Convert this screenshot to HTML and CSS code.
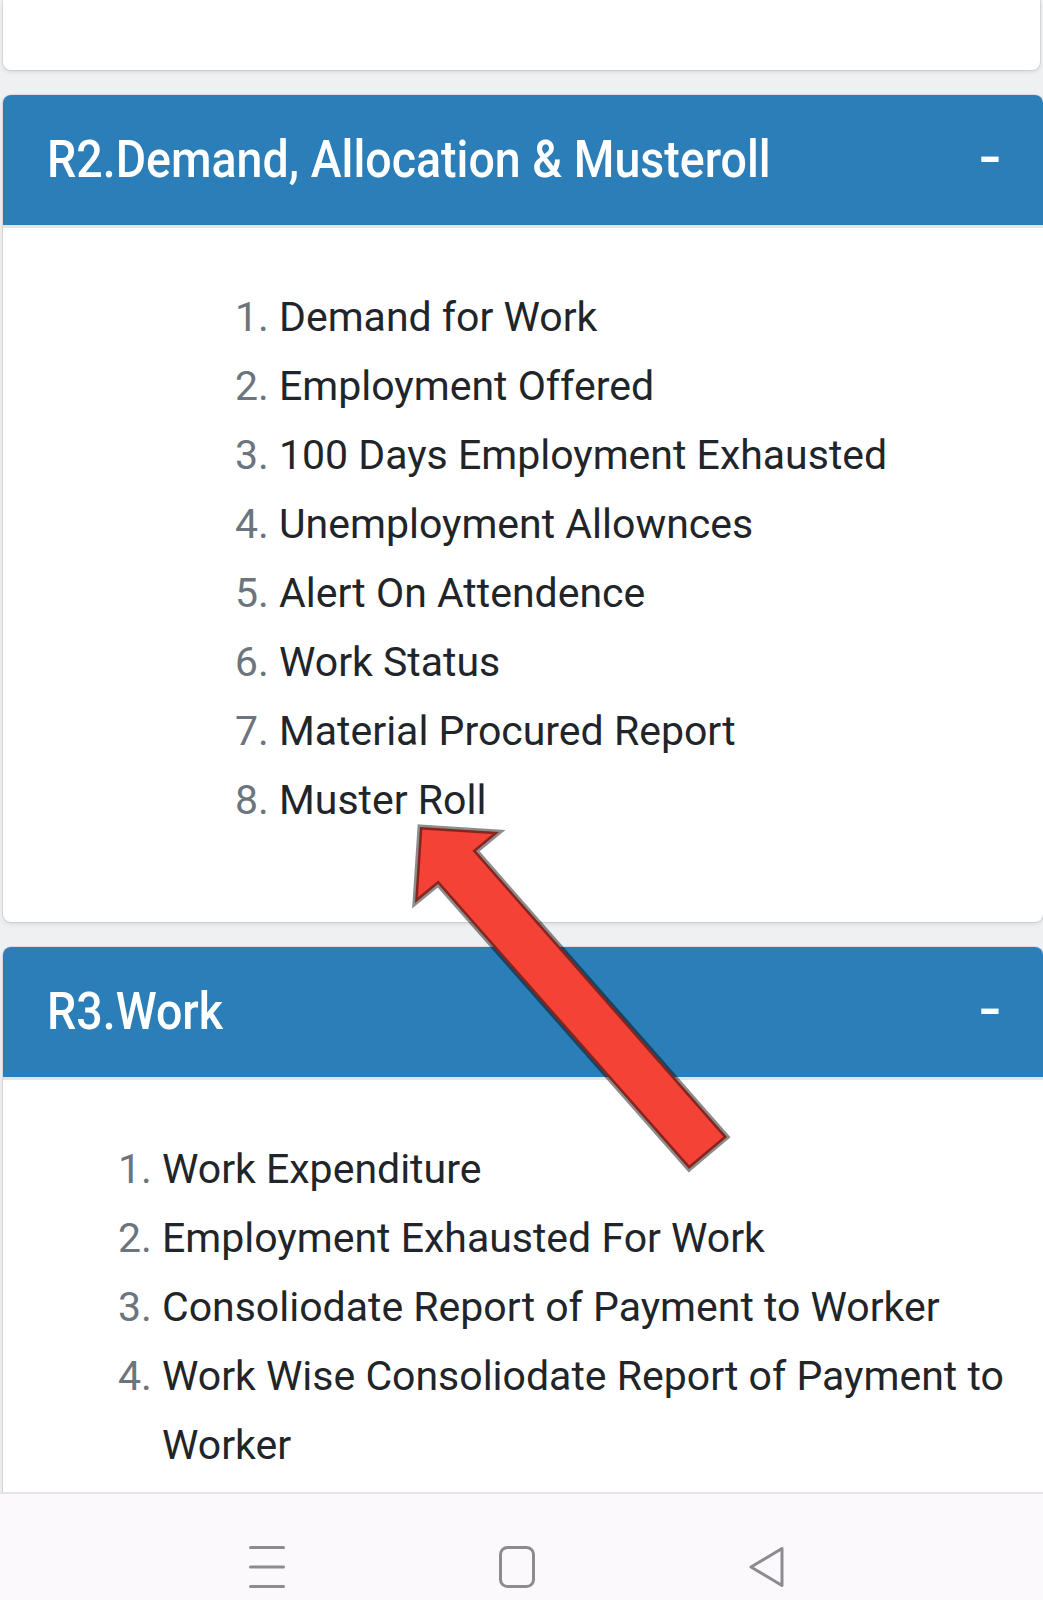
FILE: index.html
```html
<!DOCTYPE html>
<html lang="en">
<head>
<meta charset="utf-8">
<title>Reports</title>
<link rel="stylesheet" href="styles.css">
</head>
<body>
<div class="screen">
  <div class="content">
    <div class="card card-top"></div>

    <section class="card">
      <div class="card-header">
        <span class="title">R2.Demand, Allocation &amp; Musteroll</span>
        <span class="toggle">-</span>
      </div>
      <div class="card-body">
        <ol class="report-list list-r2">
          <li>Demand for Work</li>
          <li>Employment Offered</li>
          <li>100 Days Employment Exhausted</li>
          <li>Unemployment Allownces</li>
          <li>Alert On Attendence</li>
          <li>Work Status</li>
          <li>Material Procured Report</li>
          <li>Muster Roll</li>
        </ol>
      </div>
    </section>

    <section class="card">
      <div class="card-header">
        <span class="title">R3.Work</span>
        <span class="toggle">-</span>
      </div>
      <div class="card-body">
        <ol class="report-list list-r3">
          <li>Work Expenditure</li>
          <li>Employment Exhausted For Work</li>
          <li>Consoliodate Report of Payment to Worker</li>
          <li>Work Wise Consoliodate Report of Payment to Worker</li>
        </ol>
      </div>
    </section>
  </div>

  <nav class="navbar">
    <svg class="nav-icon" viewBox="0 0 36 42" width="36" height="42" aria-label="Menu">
      <line x1="1.5" y1="1.5" x2="34.5" y2="1.5"/>
      <line x1="1.5" y1="21" x2="34.5" y2="21"/>
      <line x1="1.5" y1="40.5" x2="34.5" y2="40.5"/>
    </svg>
    <svg class="nav-icon" viewBox="0 0 36 42" width="36" height="42" aria-label="Home">
      <rect x="1.5" y="1.5" width="33" height="39" rx="7" ry="7"/>
    </svg>
    <svg class="nav-icon" viewBox="0 0 36 42" width="36" height="42" aria-label="Back">
      <path d="M33 2.5 L33 39.5 L2 21 Z"/>
    </svg>
  </nav>

  <svg class="arrow-overlay" viewBox="0 0 1043 1600" width="1043" height="1600" aria-hidden="true">
    <polygon points="420,827 499,832 476,851 727,1137 689,1169 438,884 415,903"/>
  </svg>
</div>
</body>
</html>
```

FILE: styles.css
```css
html, body {
  margin: 0;
  padding: 0;
}

body {
  background: #eef0f2;
  font-family: Roboto, "Noto Sans", "Liberation Sans", sans-serif;
  color: #212529;
}

.screen {
  position: relative;
  width: 1043px;
  height: 1600px;
  overflow: hidden;
}

.content {
  height: 1492px;
  overflow: hidden;
  padding: 0 0 0 3px;
  display: flex;
  flex-direction: column;
  gap: 25px;
}

.card {
  background: #ffffff;
  border-radius: 8px;
  box-shadow: 0 0 0 1px rgba(0, 0, 0, 0.07), 0 2px 4px rgba(0, 0, 0, 0.1);
  flex-shrink: 0;
}

.card-top {
  height: 70px;
  margin-right: 3px;
  border-radius: 0 0 8px 8px;
}

.card-header {
  height: 130px;
  background: #2b7eb8;
  border-radius: 8px 8px 0 0;
  border-bottom: 3px solid #e1e6ea;
  display: flex;
  align-items: center;
  padding: 0 43px 0 44px;
  color: #ffffff;
}

.title {
  display: inline-block;
  font-size: 52px;
  font-weight: 500;
  line-height: 1;
  white-space: nowrap;
  transform: scaleX(0.895);
  transform-origin: left center;
}

.toggle {
  margin-left: auto;
  font-size: 72px;
  font-weight: 400;
  line-height: 1;
  padding-bottom: 6px;
}

.card-body {
  padding: 55px 20px 87px 0;
}

.report-list {
  margin: 0;
  font-size: 41px;
  line-height: 69px;
  font-weight: 400;
  color: #212529;
}

.report-list li::marker {
  color: #6c757d;
}

.list-r2 {
  padding-left: 276px;
}

.list-r3 {
  padding-left: 159px;
}

.navbar {
  box-sizing: border-box;
  height: 108px;
  border-top: 2px solid #e6e4ea;
  background: #fcf9fc;
  display: grid;
  grid-template-columns: repeat(3, 250px);
  justify-content: center;
  justify-items: center;
  align-items: start;
  padding: 52px 10px 0 0;
}

.nav-icon {
  display: block;
  fill: none;
  stroke: #8c8c90;
  stroke-width: 3;
  stroke-linecap: round;
  stroke-linejoin: round;
}

.arrow-overlay {
  position: absolute;
  top: 0;
  left: 0;
  pointer-events: none;
}

.arrow-overlay polygon {
  fill: #f44336;
  stroke: rgba(0, 0, 0, 0.45);
  stroke-width: 5;
  stroke-linejoin: miter;
}
```
